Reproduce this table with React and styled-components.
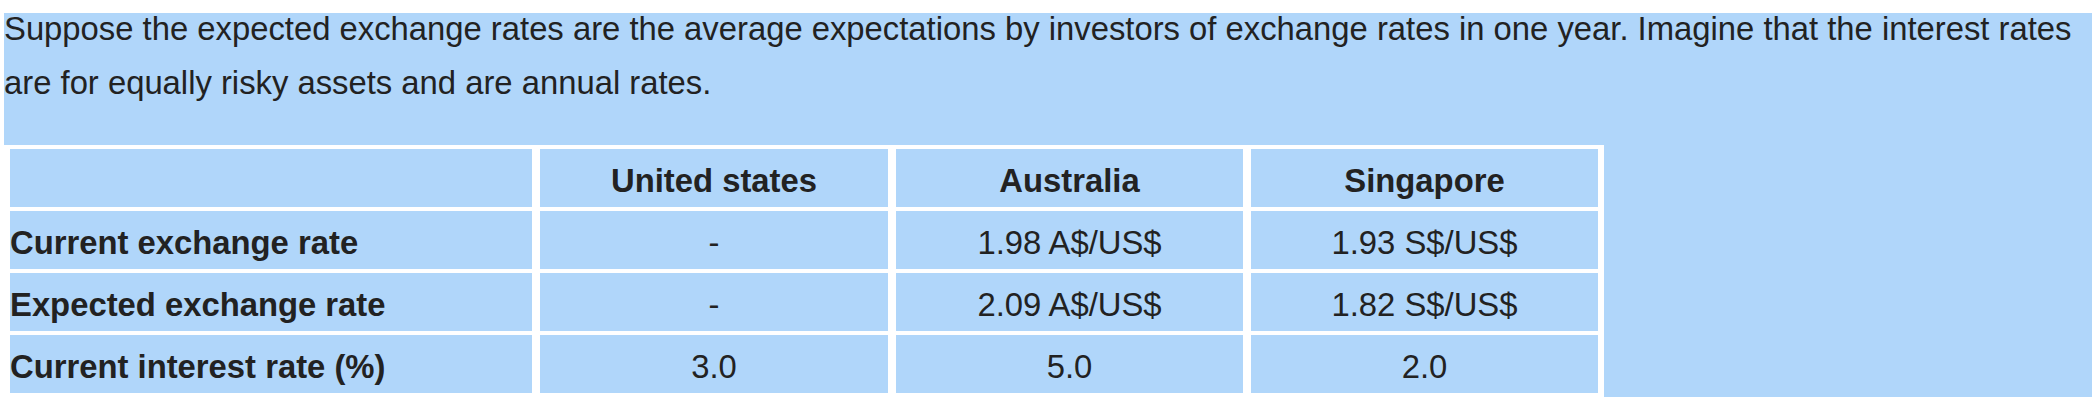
import React from "react";
import styled, { createGlobalStyle } from "styled-components";

const GlobalStyle = createGlobalStyle`
  body {
    margin: 0;
    background: #fff;
    font-family: "Liberation Sans", Arial, Helvetica, sans-serif;
    color: #222;
  }
`;

const Panel = styled.div`
  display: flow-root; // keep the paragraph margin inside the blue box
  background: #b0d6fa; // light blue box
  margin: 13px 6px 0 4px;
  font-size: 32.8px;
`;

const Intro = styled.p`
  margin: -11px 0 35px 0; // first line sits tight to the top edge
  line-height: 54px;
`;

const RatesTable = styled.table`
  background: #fff;
  border-collapse: separate;
  border-spacing: 4px;
  table-layout: fixed;
  width: 1600px;
  font-size: 32.8px;
  color: #222;
`;

const Cell = styled.td`
  background: #b0d6fa;
  border-left: 2px solid #fff;
  border-right: 2px solid #fff;
  height: 58px;
  padding: 6px 0 0 0;
  box-sizing: border-box;
  text-align: ${(p) => (p.$label ? "left" : "center")};
  font-weight: ${(p) => (p.$bold ? "bold" : "normal")};
  white-space: nowrap;
`;

const rows = [
  ["Current exchange rate", "-", "1.98 A$/US$", "1.93 S$/US$"],
  ["Expected exchange rate", "-", "2.09 A$/US$", "1.82 S$/US$"],
  ["Current interest rate (%)", "3.0", "5.0", "2.0"],
];

const App = () => {
  return (
    <>
      <GlobalStyle />
      <Panel>
        <Intro>
          Suppose the expected exchange rates are the average expectations by
          investors of exchange rates in one year. Imagine that the interest
          rates are for equally risky assets and are annual rates.
        </Intro>
        <RatesTable>
          <colgroup>
            <col style={{ width: 526 }} />
            <col style={{ width: 352 }} />
            <col style={{ width: 351 }} />
            <col style={{ width: 351 }} />
          </colgroup>
          <tbody>
            <tr>
              <Cell />
              <Cell $bold>United states</Cell>
              <Cell $bold>Australia</Cell>
              <Cell $bold>Singapore</Cell>
            </tr>
            {rows.map((r) => (
              <tr key={r[0]}>
                <Cell $label $bold>
                  {r[0]}
                </Cell>
                {r.slice(1).map((v, i) => (
                  <Cell key={i}>{v}</Cell>
                ))}
              </tr>
            ))}
          </tbody>
        </RatesTable>
      </Panel>
    </>
  );
};

export default App;
